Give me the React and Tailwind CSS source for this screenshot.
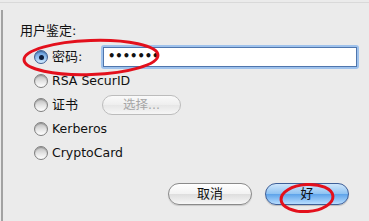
const font = { fontFamily: '"DejaVu Sans", "Noto Sans CJK SC", sans-serif' }

function Radio({ checked }) {
  if (checked) {
    return (
      <span className="flex h-[14px] w-[14px] shrink-0 items-center justify-center rounded-full border border-[#3f5f93] bg-[linear-gradient(#5c95d8,#9cc8f3_60%,#d2eaff)] shadow-[inset_0_1px_1px_rgba(0,0,0,0.3)]">
        <span className="h-[5px] w-[5px] rounded-full bg-[#0d1d3a]" />
      </span>
    )
  }
  return (
    <span className="h-[14px] w-[14px] shrink-0 rounded-full border border-[#7f7f7f] bg-[linear-gradient(#bdbdbd,#e6e6e6_55%,#ffffff)] shadow-[inset_0_1px_1px_rgba(0,0,0,0.25)]" />
  )
}

function Row({ checked, children }) {
  return (
    <div className="flex h-[24px] items-center gap-[4px]">
      <Radio checked={checked} />
      {children}
    </div>
  )
}

export default function App() {
  return (
    <div className="relative h-[221px] w-[369px] overflow-hidden bg-[#ebebeb] text-[12.5px] text-[#111]" style={font}>
      <div className="mt-[2px] h-px bg-[#d9d9d9]" />
      <div className="ml-px mt-[7px] h-[211px] border-l-2 border-[#a2a2a2] pl-[17px] pr-[14px] pt-[12px]">
        <div className="h-[18px] text-[13px] leading-[18px]">用户鉴定:</div>

        <div className="ml-[14px] mt-[5px]">
          <Row checked>
            <span className="w-[45px] shrink-0 text-[13px]">密码:</span>
            <div className="h-[24px] w-[258px] shrink-0 rounded-[3px] bg-[#9fc2ec] p-[2px]">
              <div className="flex h-full items-center border border-[#4f76ad] bg-white px-[4px] text-[11.5px] font-bold leading-none">
                •••••••
              </div>
            </div>
          </Row>
          <Row>
            <span>RSA SecurID</span>
          </Row>
          <Row>
            <span className="w-[46px] shrink-0 text-[13px]">证书</span>
            <div className="flex h-[20px] w-[79px] items-center justify-center rounded-full border border-[#bcbcbc] bg-[linear-gradient(#fafafa,#eeeeee_50%,#e6e6e6_51%,#f6f6f6)] text-[12.5px] text-[#a6a6a6]">
              选择...
            </div>
          </Row>
          <Row>
            <span>Kerberos</span>
          </Row>
          <Row>
            <span>CryptoCard</span>
          </Row>
        </div>

        <div className="mr-[6px] mt-[18px] flex justify-end gap-[13px]">
          <div className="flex h-[22px] w-[84px] items-center justify-center rounded-full border border-[#8a8a8a] bg-[linear-gradient(#ffffff,#f2f2f2_50%,#dedede_52%,#f7f7f7)] text-[13px] shadow-[0_1px_1px_rgba(0,0,0,0.15)]">
            取消
          </div>
          <div className="flex h-[22px] w-[84px] items-center justify-center rounded-full border border-[#3e5f98] bg-[linear-gradient(#cfe6fb,#8ec2f2_50%,#5fa4ea_52%,#b8ddff)] text-[13px] shadow-[0_1px_1px_rgba(0,0,0,0.2)]">
            好
          </div>
        </div>
      </div>

      <svg className="pointer-events-none absolute left-0 top-0" width="369" height="221">
        <ellipse cx="91" cy="57.5" rx="67" ry="17" fill="none" stroke="#e3101c" strokeWidth="3" transform="rotate(-2 91 57.5)" />
        <ellipse cx="307" cy="198" rx="26" ry="13.5" fill="none" stroke="#e3101c" strokeWidth="3" transform="rotate(-4 307 198)" />
      </svg>
    </div>
  )
}
